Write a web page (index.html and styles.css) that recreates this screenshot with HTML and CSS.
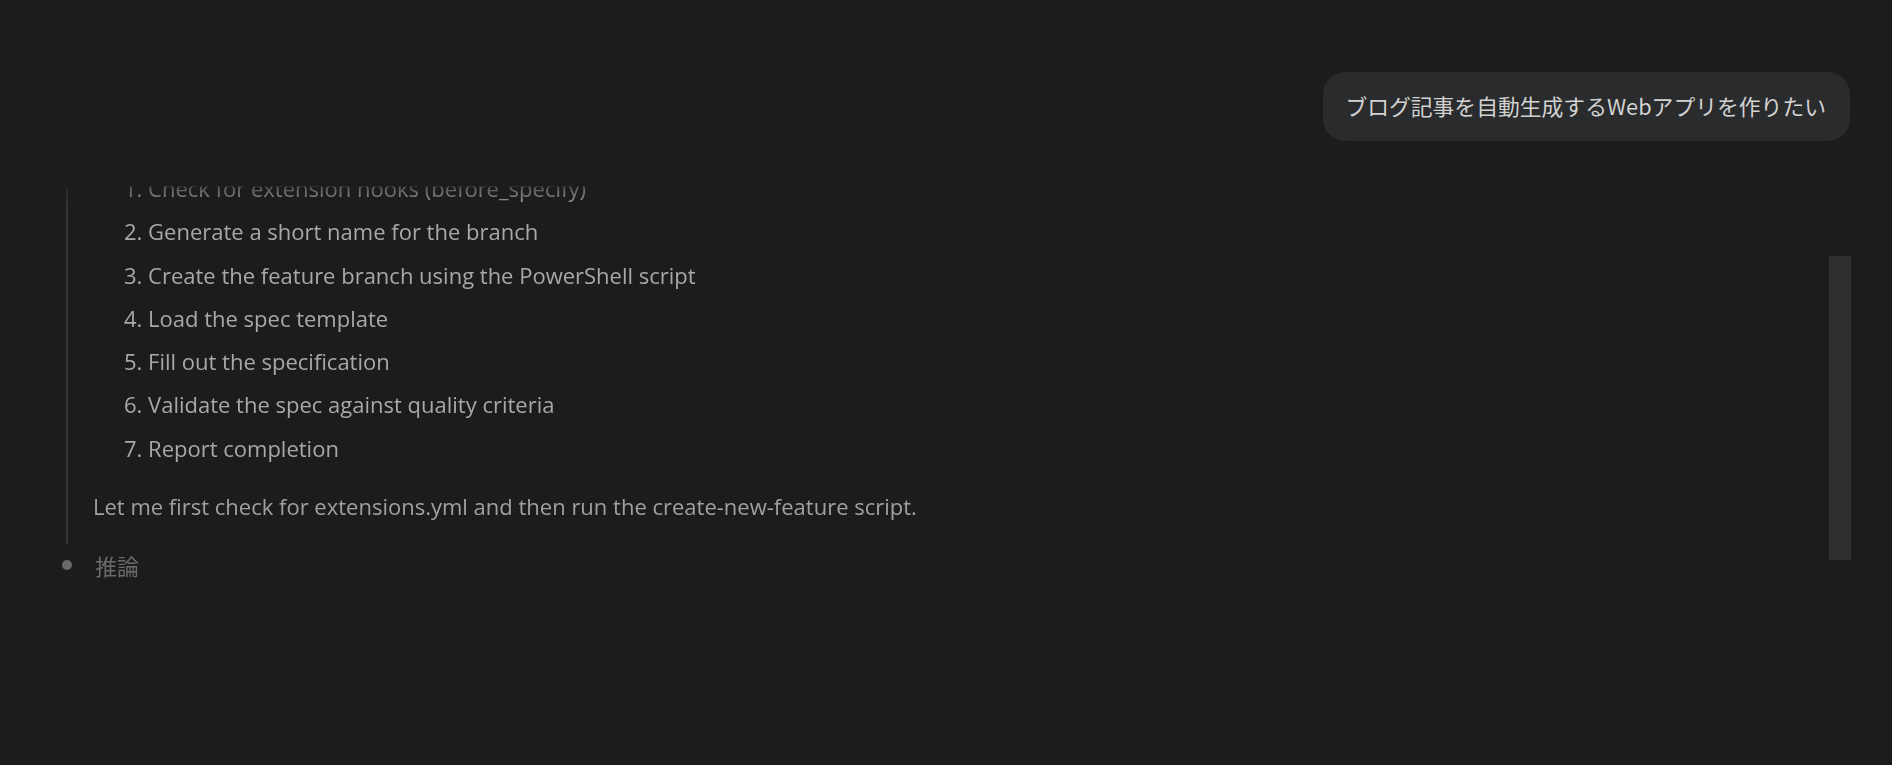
FILE: index.html
```html
<!DOCTYPE html>
<html lang="ja">
<head>
<meta charset="utf-8">
<title>Chat</title>
<link rel="stylesheet" href="styles.css">
</head>
<body>
<div class="page">
  <div class="request">
    <div class="bubble">ブログ記事を自動生成するWebアプリを作りたい</div>
  </div>
  <div class="viewport">
    <div class="scroll">
      <div class="thinking">
        <ol class="steps">
          <li>Check for extension hooks (before_specify)</li>
          <li>Generate a short name for the branch</li>
          <li>Create the feature branch using the PowerShell script</li>
          <li>Load the spec template</li>
          <li>Fill out the specification</li>
          <li>Validate the spec against quality criteria</li>
          <li>Report completion</li>
        </ol>
        <p class="note">Let me first check for extensions.yml and then run the create-new-feature script.</p>
      </div>
      <div class="status"><span class="dot"></span><span class="status-label">推論</span></div>
    </div>
    <div class="scrollbar"></div>
  </div>
</div>
</body>
</html>
```

FILE: styles.css
```css
html, body {
  margin: 0;
  padding: 0;
  background: #1c1c1c;
}

.page {
  width: 1892px;
  height: 765px;
  overflow: hidden;
  font-family: "Open Sans", "Noto Sans CJK JP", sans-serif;
  color: #a8a8a8;
}

.request {
  display: flex;
  justify-content: flex-end;
  padding: 72px 42px 0 0;
}

.bubble {
  background: #2a2b2c;
  border-radius: 22px;
  padding: 0 24px 0 22px;
  height: 69px;
  line-height: 68px;
  font-family: "Noto Sans CJK JP", sans-serif;
  font-size: 21.8px;
  color: #d2d2d2;
  white-space: nowrap;
}

.viewport {
  position: relative;
  margin-top: 45px;
  height: 579px;
  overflow: hidden;
}

.scroll {
  margin-top: -19px;
  -webkit-mask-image: linear-gradient(to bottom, transparent 0, transparent 19px, rgba(0,0,0,0.4) 20px, #000 40px);
  mask-image: linear-gradient(to bottom, transparent 0, transparent 19px, rgba(0,0,0,0.4) 20px, #000 40px);
}

.thinking {
  margin-left: 66px;
  border-left: 2px solid #363636;
  padding: 0 0 16px 25px;
}

.steps {
  margin: 0;
  padding: 0 0 0 31px;
  list-style-position: inside;
  font-size: 22px;
  line-height: 43.3px;
}

.note {
  margin: 14.7px 0 0;
  font-size: 22px;
  line-height: 43.3px;
  color: #a0a0a0;
}

.status {
  display: flex;
  align-items: center;
  gap: 23px;
  height: 42px;
  padding-left: 62px;
}

.dot {
  width: 10px;
  height: 10px;
  border-radius: 50%;
  background: #6a6a6a;
}

.status-label {
  font-family: "Noto Sans CJK JP", sans-serif;
  font-size: 22px;
  color: #6b6b6b;
}

.scrollbar {
  position: absolute;
  top: 70px;
  right: 41px;
  width: 22px;
  height: 304px;
  background: #2e2f30;
}
```
